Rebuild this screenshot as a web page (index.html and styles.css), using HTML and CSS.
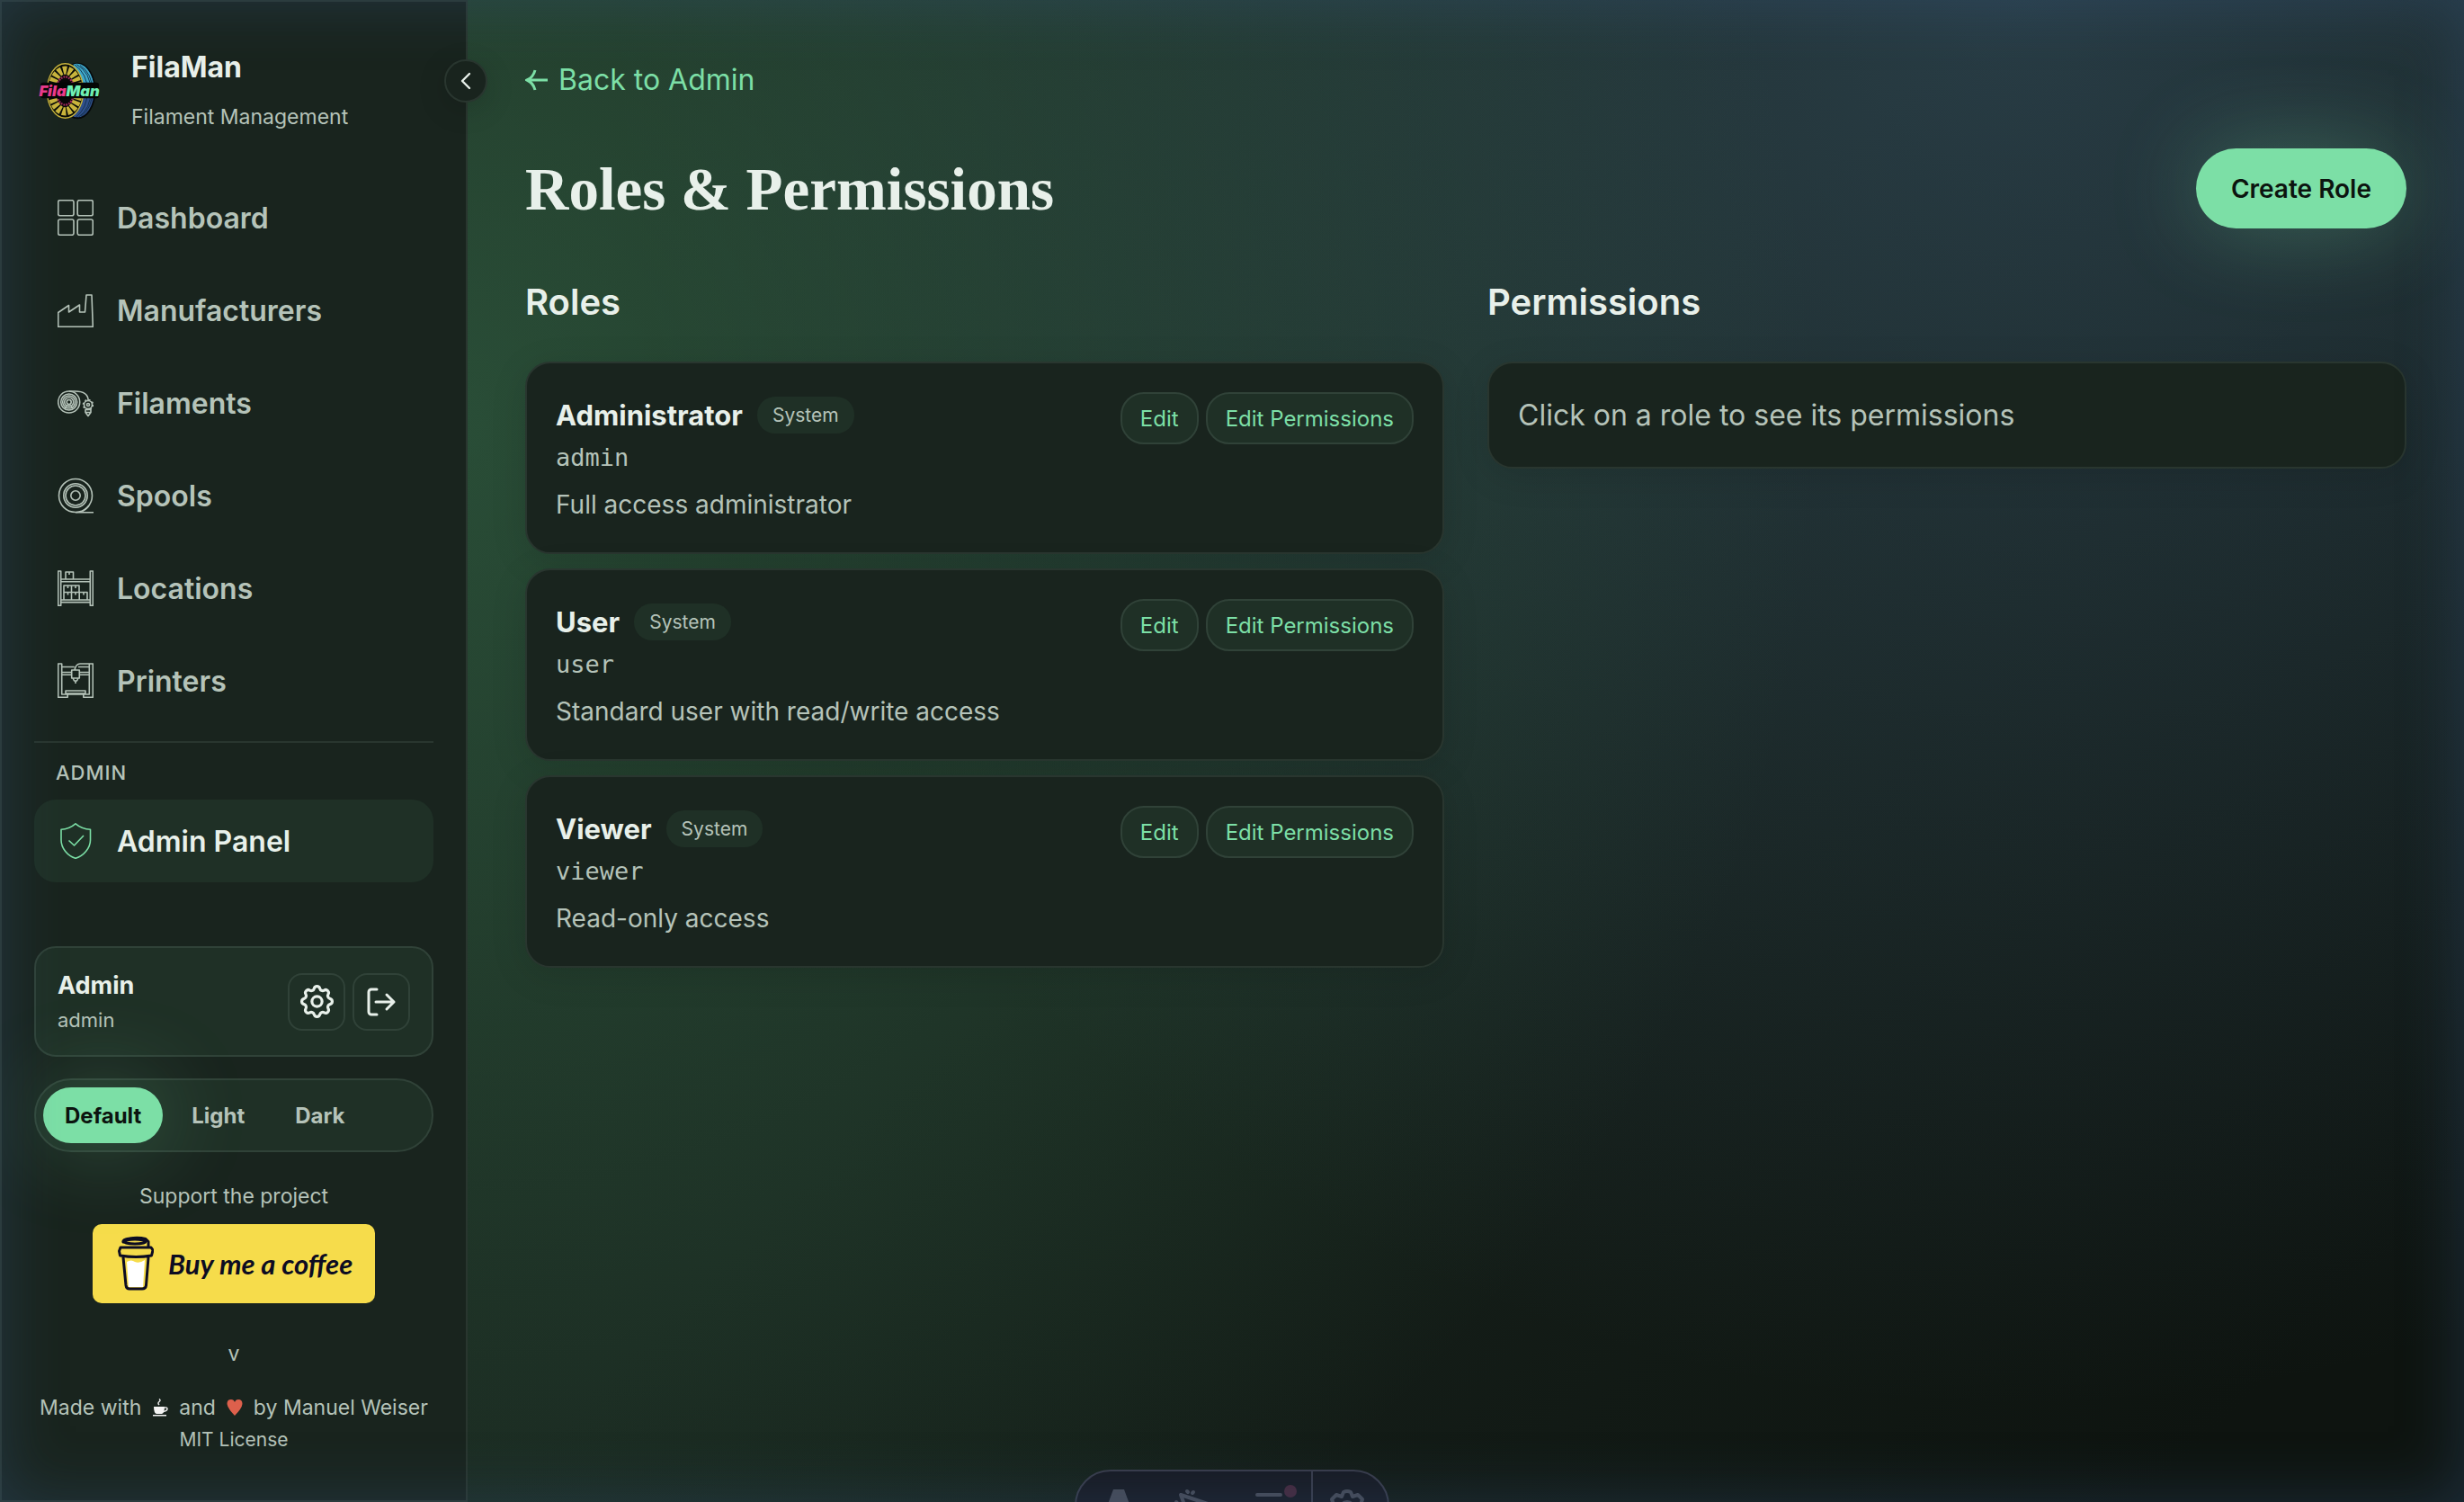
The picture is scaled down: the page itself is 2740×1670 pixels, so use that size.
FILE: index.html
```html
<!DOCTYPE html>
<html lang="en">
<head>
<meta charset="utf-8">
<meta name="viewport" content="width=device-width, initial-scale=1">
<title>FilaMan - Roles &amp; Permissions</title>
<link rel="stylesheet" href="styles.css">
</head>
<body>
<div class="app">
  <aside class="sidebar">
    <button class="collapse" type="button" aria-label="Collapse sidebar">
      <svg width="24" height="24" viewBox="0 0 24 24" fill="none" stroke="currentColor" stroke-width="2.4" stroke-linecap="round" stroke-linejoin="round"><path d="M16 4l-8 8 8 8"/></svg>
    </button>
    <header class="brand">
      <svg class="logo" viewBox="0 0 72 72" aria-hidden="true">
        <ellipse cx="45" cy="36" rx="21" ry="33" fill="#2f4f8c" stroke="#06090a" stroke-width="2"/>
        <path d="M40 3.500a21 32.500 0 0 1 25 32H40z" fill="#3fa9c9"/>
        <g fill="none" stroke="#12304a" stroke-width="1"><path d="M44 4q17 10 17 32T46 68"/><path d="M41 4q16 11 16 32T43 68"/><path d="M48 5q15 10 15 31T49 67"/></g>
        <ellipse cx="30" cy="36" rx="22" ry="33" fill="#0a0d08" stroke="#c9b43c" stroke-width="1.500"/>
        <ellipse cx="30" cy="36" rx="16" ry="25" fill="none" stroke="#c9b43c" stroke-width="10" stroke-dasharray="4.500 1.800"/>
        <ellipse cx="30" cy="36" rx="11" ry="17" fill="#090909" stroke="#a82a62" stroke-width="2.500" stroke-dasharray="2 1.200"/>
        <rect x="0" y="26" width="71" height="19" rx="3" fill="#050706"/>
        <text x="35" y="42" text-anchor="middle" class="logo-text"><tspan fill="#ee3a8c">Fila</tspan><tspan fill="#6ff0b4">Man</tspan></text>
      </svg>
      <div>
        <div class="brand-name">FilaMan</div>
        <div class="brand-sub">Filament Management</div>
      </div>
    </header>

    <nav class="nav">
      <a class="nav-item" href="#dashboard">
        <svg class="icon" viewBox="0 0 40 40"><rect x=".7" y=".7" width="17.300" height="17" rx="2"/><rect x="22.200" y=".7" width="17.100" height="17" rx="2"/><rect x=".7" y="22" width="17.300" height="17.300" rx="2"/><rect x="22.200" y="22" width="17.100" height="17.300" rx="2"/></svg>
        Dashboard</a>
      <a class="nav-item" href="#manufacturers">
        <svg class="icon" viewBox="0 0 40 40"><path d="M.7 38.300V22.500L12.500 14.500v7.500l12-8V22h6L32 3h6l1.300 35.300z"/></svg>
        Manufacturers</a>
      <a class="nav-item" href="#filaments">
        <svg class="icon" viewBox="0 0 40 40"><circle cx="12.700" cy="19" r="12"/><circle cx="12.700" cy="19" r="9"/><circle cx="12.700" cy="19" r="7"/><circle cx="12.700" cy="19" r="5"/><circle cx="12.700" cy="19" r="2.500"/><path d="M12.700 7h7c9 0 14 2.500 14.500 10M8.500 26l1.500-3h5l1.500 3"/><circle cx="34" cy="22" r="4.500"/><circle cx="34" cy="22" r="1.500"/><circle cx="34" cy="22" r="5.500" stroke-dasharray="2 2.300"/><path d="M31 27.500h6v3l-3 4-3-4zM31 30.500h6"/></svg>
        Filaments</a>
      <a class="nav-item" href="#spools">
        <svg class="icon" viewBox="0 0 40 40"><circle cx="20" cy="20" r="18.500"/><circle cx="20" cy="20" r="13.200"/><circle cx="20" cy="20" r="11"/><circle cx="20" cy="20" r="5.200"/><path d="M20 38.700h20M28 37.200c3-1.500 5-3.200 7-6"/></svg>
        Spools</a>
      <a class="nav-item" href="#locations">
        <svg class="icon" viewBox="0 0 40 40"><path d="M.7 1h3v38.300h-3zM36.300 1h3v38.300h-3zM3.700 10h32.600M3.700 12.800h32.600M3.700 33h32.600M3.700 35.600h32.600M9 10V2h8.500v8M13 2v3M7 33v-8.500h26V33M7 24.500V17h17v7.500M15.500 17v16M24.200 24.500V33M11.500 17v3M20 17v3M11.500 24.500v3M20 24.500v3M29 24.500v3"/></svg>
        Locations</a>
      <a class="nav-item" href="#printers">
        <svg class="icon" viewBox="0 0 40 40"><path d="M.7 1h4v34h6.500v3.300H.7zM35.300 1h4v37.300H28.800V35h6.500zM4.700 4.500h14M4.700 10.500h11M4.700 13.200h11M24.300 10.500h11M24.300 13.200h11M35.300 1H25c-3 0-5 2-6 7M23 4.500h12M15.700 8h8.600v9h-8.600zM17 17l1.500 3h3l1.500-3M20 20v3M9 34v-3h22v3zM11.200 35h17.600"/></svg>
        Printers</a>
    </nav>

    <section class="admin-nav">
      <h2 class="nav-label">ADMIN</h2>
      <a class="nav-item active" href="#admin" aria-current="page">
        <svg class="icon" viewBox="0 0 40 40"><path d="M20 .8C16 4.200 10 7 4 7.200V19c0 9 7 17.500 16 20.300C29 36.500 36.500 28 36.500 19V7.200C30 7 24 4.200 20 .8zM12.500 19.500l6 5.500L29 14"/></svg>
        Admin Panel</a>
    </section>

    <section class="user-card">
      <div class="user-text">
        <div class="user-name">Admin</div>
        <div class="user-id">admin</div>
      </div>
      <button class="icon-btn" type="button" aria-label="Settings">
        <svg width="45" height="45" viewBox="0 0 24 24" fill="none" stroke="currentColor" stroke-width="1.700" stroke-linecap="round" stroke-linejoin="round"><circle cx="12" cy="12" r="3"/><path d="M10.300 4.300c.4-1.750 2.950-1.750 3.400 0a1.720 1.720 0 0 0 2.570 1.070c1.540-.94 3.300.83 2.370 2.370a1.720 1.720 0 0 0 1.060 2.570c1.760.43 1.760 2.930 0 3.360a1.720 1.720 0 0 0-1.060 2.570c.93 1.540-.83 3.300-2.370 2.370a1.720 1.720 0 0 0-2.570 1.060c-.43 1.760-2.970 1.760-3.400 0a1.720 1.720 0 0 0-2.570-1.060c-1.540.93-3.300-.83-2.370-2.370a1.720 1.720 0 0 0-1.060-2.570c-1.760-.43-1.760-2.930 0-3.360a1.720 1.720 0 0 0 1.060-2.570c-.93-1.540.83-3.310 2.370-2.370 1 .6 2.300.07 2.570-1.070z"/></svg>
      </button>
      <button class="icon-btn" type="button" aria-label="Log out">
        <svg width="40" height="40" viewBox="0 0 40 40" fill="none" stroke="currentColor" stroke-width="3" stroke-linecap="round" stroke-linejoin="round"><path d="M15 6H9a3 3 0 0 0-3 3v22a3 3 0 0 0 3 3h6M14 20h20M26 12l8 8-8 8"/></svg>
      </button>
    </section>

    <div class="themes" role="group" aria-label="Theme">
      <button class="theme selected" type="button">Default</button>
      <button class="theme" type="button">Light</button>
      <button class="theme" type="button">Dark</button>
    </div>

    <footer class="foot">
      <div class="foot-line">Support the project</div>
      <a class="coffee" href="#coffee">
        <svg width="40" height="62" viewBox="0 0 40 62" fill="none" stroke="#0d0c22" stroke-width="3" stroke-linecap="round" stroke-linejoin="round"><path d="M10 29q5-3 9 0 5 2 11-2l-2 30H12z" fill="#fff" stroke="none"/><path d="M6 24l3 31q.5 4 4 4h14q4 0 4.500-4L34 24M3 13h34l2 3-1.500 6q-17 3-35 0L1.500 17z"/><path d="M6 7q-1-3 7-4 10-1.500 18 .5l3 3v5"/><ellipse cx="19" cy="6.500" rx="12" ry="2.500"/></svg>
        <span>Buy me a coffee</span>
      </a>
      <div class="foot-line version">v</div>
      <div class="foot-line made">Made with
        <svg width="18" height="20" viewBox="0 0 18 20" aria-hidden="true"><path d="M2 9h12q0 7-3 8H5q-3-1-3-8zM1 18h15v1.500H1z" fill="#f4f4f4"/><path d="M14 10q3-.5 3 1.500t-4 3M8 7q-2-2 0-3.500T8 .5" fill="none" stroke="#e8e8e8" stroke-width="1.500"/></svg>
        and
        <svg width="18" height="20" viewBox="0 0 18 20" aria-hidden="true"><path d="M9 19Q1 11 .5 6 .5 1 5 1q3 0 4 3 1-3 4-3 4.500 0 4.500 5Q17 11 9 19z" fill="#dd604c"/></svg>
        by Manuel Weiser</div>
      <div class="foot-line license">MIT License</div>
    </footer>
  </aside>

  <main class="main">
    <a class="back" href="#admin"><svg width="26" height="26" viewBox="0 0 26 26" fill="none" stroke="currentColor" stroke-width="3" aria-hidden="true"><path d="M25 13H4M11 2q-2 8-9 11 7 3 9 11"/></svg>Back to Admin</a>
    <div class="title-row">
      <h1>Roles &amp; Permissions</h1>
      <button class="create" type="button">Create Role</button>
    </div>
    <div class="columns">
      <section>
        <h2 class="col-title">Roles</h2>
        <div class="roles">
          <article class="card role">
            <div class="role-text">
              <div class="role-head"><h3>Administrator</h3><span class="badge">System</span></div>
              <code>admin</code>
              <p>Full access administrator</p>
            </div>
            <div class="actions"><button class="pill" type="button">Edit</button><button class="pill" type="button">Edit Permissions</button></div>
          </article>
          <article class="card role">
            <div class="role-text">
              <div class="role-head"><h3>User</h3><span class="badge">System</span></div>
              <code>user</code>
              <p>Standard user with read/write access</p>
            </div>
            <div class="actions"><button class="pill" type="button">Edit</button><button class="pill" type="button">Edit Permissions</button></div>
          </article>
          <article class="card role">
            <div class="role-text">
              <div class="role-head"><h3>Viewer</h3><span class="badge">System</span></div>
              <code>viewer</code>
              <p>Read-only access</p>
            </div>
            <div class="actions"><button class="pill" type="button">Edit</button><button class="pill" type="button">Edit Permissions</button></div>
          </article>
        </div>
      </section>
      <section>
        <h2 class="col-title">Permissions</h2>
        <div class="card hint">Click on a role to see its permissions</div>
      </section>
    </div>
  </main>
</div>

<div class="devbar" aria-hidden="true">
  <svg width="346" height="76" viewBox="0 0 346 76" fill="none" stroke="#464a55" stroke-width="4" stroke-linecap="round" stroke-linejoin="round">
    <path d="M41 20h12l17 46H56l-3-10H41l-3 10H24z" fill="#464a55" stroke="none"/>
    <path d="M116 26l30 10-14 6-5 14zM123 22l1 1M129 24l1-1M111 34l1 1"/>
    <path d="M201 26h26M201 38h28M201 50h28"/>
    <circle cx="238" cy="22" r="7" fill="#44283b" stroke="none"/>
    <path d="M262 0v76" stroke="#383b49" stroke-width="2"/>
    <path d="M297 23q4-2 8 0l2 5 6-2 5 5-2 6 5 2v9l-5 2 2 6-5 5-6-2-2 5h-8l-2-5-6 2-5-5 2-6-5-2v-9l5-2-2-6 5-5 6 2z"/><circle cx="301" cy="42" r="8"/>
  </svg>
</div>
<div class="edge-glow" aria-hidden="true"></div>
</body>
</html>
```
FILE: styles.css
```css
:root {
  --surface: #19241e;
  --raised: #1f3026;
  --line: #29362f;
  --line-strong: #304238;
  --text: #e8f0ea;
  --muted: #b5c3b9;
  --accent: #7cdfa6;
}

* { box-sizing: border-box; }

body {
  margin: 0;
  min-height: 100vh;
  color: var(--text);
  font-family: Inter, "Liberation Sans", sans-serif;
  font-size: 32px;
  background:
    radial-gradient(circle at 18% 28%, rgba(70, 150, 100, .36), transparent 60%),
    radial-gradient(circle at 82% 0%, rgba(75, 115, 155, .32), transparent 56%),
    linear-gradient(135deg, #1a261e, #18231d 50%, #0e1410 92%);
}

h1, h2, h3, p { margin: 0; }
button { font: inherit; color: inherit; cursor: pointer; }
a { color: inherit; text-decoration: none; }

.app { display: flex; min-height: 100vh; }

/* Sidebar */
.sidebar {
  position: relative;
  flex: 0 0 520px;
  padding: 48px 36px 24px;
  border: 2px solid var(--line);
  background: var(--surface);
}

.collapse {
  position: absolute;
  top: 64px;
  right: -24px;
  display: grid;
  place-items: center;
  width: 48px;
  height: 48px;
  padding: 0;
  border: 2px solid var(--line);
  border-radius: 50%;
  background: var(--surface);
  box-shadow: 0 8px 32px rgba(0, 0, 0, .15);
}

.brand { display: flex; align-items: center; gap: 32px; padding-left: 4px; }
.logo { width: 72px; height: 66px; }
.logo-text { font: italic 900 18px Inter, sans-serif; }
.brand-name { font-weight: 700; line-height: 50px; margin-bottom: 8px; }
.brand-sub { font-size: 23px; line-height: 44px; color: var(--muted); }

.nav { display: flex; flex-direction: column; gap: 11px; margin-top: 44px; }
.nav-item {
  display: flex;
  align-items: center;
  gap: 26px;
  height: 92px;
  padding: 0 26px;
  border-radius: 24px;
  font-weight: 600;
  color: var(--muted);
}
.nav-item.active { color: var(--text); background: var(--raised); }
.icon { width: 40px; height: 40px; fill: none; stroke: currentColor; stroke-width: 1.6; stroke-linejoin: round; }
.active .icon { stroke: var(--accent); }

.admin-nav { margin-top: 21px; padding-top: 12px; border-top: 2px solid var(--line); }
.nav-label {
  margin-bottom: 9px;
  padding-left: 24px;
  font-size: 22px;
  font-weight: 500;
  line-height: 42px;
  letter-spacing: 1px;
  color: var(--muted);
}

.user-card {
  display: flex;
  align-items: center;
  gap: 8px;
  height: 123px;
  margin-top: 71px;
  padding: 0 24px;
  border: 2px solid var(--line-strong);
  border-radius: 24px;
  background: var(--raised);
}
.user-text { flex: 1; }
.user-name { font-size: 27px; font-weight: 700; line-height: 40px; }
.user-id { font-size: 22px; line-height: 36px; color: var(--muted); }
.icon-btn {
  display: grid;
  place-items: center;
  width: 64px;
  height: 64px;
  padding: 0;
  border: 2px solid var(--line-strong);
  border-radius: 16px;
  background: none;
}

.themes {
  display: flex;
  gap: 8px;
  margin-top: 24px;
  padding: 8px;
  border: 2px solid var(--line-strong);
  border-radius: 41px;
  background: var(--raised);
}
.theme {
  height: 62px;
  padding: 0 24px;
  border: 0;
  border-radius: 31px;
  background: none;
  font-size: 24px;
  font-weight: 700;
  color: var(--muted);
}
.theme.selected {
  background: var(--accent);
  color: #0c140f;
  box-shadow: 0 0 100px rgba(124, 223, 166, .3);
}

.foot { margin: 31px -12px 0; text-align: center; color: var(--muted); }
.foot-line { font-size: 23px; line-height: 36px; }
.coffee {
  display: flex;
  align-items: center;
  gap: 16px;
  width: 314px;
  height: 88px;
  margin: 13px auto 38px;
  padding-left: 28px;
  border-radius: 10px;
  background: #f6dc4b;
  color: #0d0c22;
  font-family: Lato, sans-serif;
  font-size: 31px;
  font-style: italic;
  font-weight: 700;
  white-space: nowrap;
}
.version { margin-bottom: 24px; }
.made { display: flex; align-items: center; justify-content: center; gap: 12px; white-space: nowrap; }
.license { font-size: 21px; }

/* Content */
.main { flex: 1; min-width: 0; padding: 65px 64px; }
.back { display: inline-flex; align-items: center; gap: 11px; line-height: 48px; color: var(--accent); }
.title-row { display: flex; align-items: center; justify-content: space-between; margin-top: 52px; }
h1 { font-family: "Liberation Serif", serif; font-size: 67px; font-weight: 700; line-height: 72px; }
.create {
  height: 89px;
  padding: 0 39px;
  border: 0;
  border-radius: 45px;
  background: var(--accent);
  color: #0c140f;
  font-size: 28px;
  font-weight: 600;
  box-shadow: 0 0 100px rgba(124, 223, 166, .3);
}

.columns { display: grid; grid-template-columns: 1fr 1fr; gap: 48px; margin-top: 54px; }
.col-title { margin-bottom: 38px; font-size: 40px; font-weight: 600; line-height: 56px; }
.roles { display: flex; flex-direction: column; gap: 16px; }
.card {
  padding: 32px;
  border: 2px solid var(--line);
  border-radius: 28px;
  background: var(--surface);
  box-shadow: 0 8px 40px rgba(0, 0, 0, .12);
}
.role { display: flex; justify-content: space-between; align-items: flex-start; }
.role-head { display: flex; align-items: center; gap: 16px; height: 50px; }
h3 { font-size: 31px; font-weight: 700; }
.badge {
  padding: 0 17px;
  border-radius: 20px;
  background: var(--raised);
  font-size: 21px;
  line-height: 41px;
  color: var(--muted);
}
code {
  display: block;
  margin: 3px 0 11px;
  font-family: "DejaVu Sans Mono", monospace;
  font-size: 27px;
  line-height: 40px;
  color: var(--muted);
}
.role p { font-size: 28px; line-height: 42px; color: var(--muted); }
.actions { display: flex; gap: 8px; }
.pill {
  height: 58px;
  padding: 0 20px;
  border: 2px solid var(--line-strong);
  border-radius: 26px;
  background: var(--raised);
  font-size: 24px;
  color: var(--accent);
}
.hint { line-height: 51px; color: var(--muted); }

/* Overlays */
.devbar {
  position: fixed;
  left: 50%;
  bottom: -44px;
  transform: translateX(-50%);
  height: 80px;
  border: 2px solid #383b49;
  border-radius: 40px;
  background: #171a22;
  overflow: hidden;
}
.devbar svg { display: block; }
.edge-glow {
  position: fixed;
  inset: 0;
  pointer-events: none;
  box-shadow: inset 0 0 70px rgba(60, 95, 140, .34);
}
```
